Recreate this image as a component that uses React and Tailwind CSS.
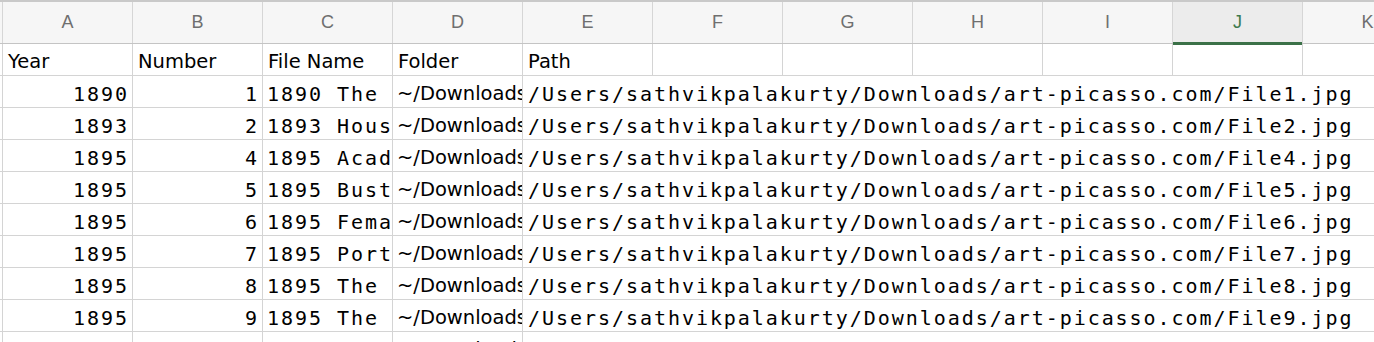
import React from "react";

const cols = ["A", "B", "C", "D", "E", "F", "G", "H", "I", "J", "K"];

const rows = [
  [1890, 1, "1890 The Picador", "File1.jpg"],
  [1893, 2, "1893 House in the Field", "File2.jpg"],
  [1895, 4, "1895 Academical Study", "File4.jpg"],
  [1895, 5, "1895 Bust of a Man", "File5.jpg"],
  [1895, 6, "1895 Female Nude", "File6.jpg"],
  [1895, 7, "1895 Portrait of Aunt Pepa", "File7.jpg"],
  [1895, 8, "1895 The Altar Boy", "File8.jpg"],
  [1895, 9, "1895 The Barefoot Girl", "File9.jpg"],
  [1896, 10, "1896 Andalusian Courtyard", "File10.jpg"],
];

const mono = "font-['DejaVu_Sans_Mono',monospace] text-[20px] tracking-[1.95px] text-black";
const sans = "font-['DejaVu_Sans',sans-serif] text-[19.5px] text-black";

export default function App() {
  return (
    <div className="w-[1374px] h-[342px] overflow-hidden bg-white">
      {/* column header */}
      <div className="flex h-[44px] border-t-2 border-b border-t-[#c9c9c9] border-b-[#c4c4c4] bg-[#f6f6f6] pl-[2px]">
        {cols.map((c) => {
          const sel = c === "J";
          return (
            <div
              key={c}
              className={
                sel
                  ? "relative flex w-[130px] shrink-0 items-center justify-center border-l border-[#d6d6d6] bg-[#ececec] font-['Liberation_Sans',sans-serif] text-[18px] text-[#3d7a4e]"
                  : "flex w-[130px] shrink-0 items-center justify-center border-l border-[#d6d6d6] font-['Liberation_Sans',sans-serif] text-[18px] text-[#6f6f6f]"
              }
            >
              {c}
              {sel && <div className="absolute bottom-[-2px] left-0 right-0 h-[3px] bg-[#3b7148]" />}
            </div>
          );
        })}
      </div>

      {/* header row */}
      <div className="flex h-[32px] border-b border-[#d4d4d4] pl-[2px]">
        {["Year", "Number", "File Name", "Folder", "Path", "", "", "", "", "", ""].map((t, i) => (
          <div
            key={i}
            className={`flex w-[130px] shrink-0 items-center overflow-hidden whitespace-nowrap border-l border-[#d4d4d4] pl-[5px] pt-[5px] ${sans}`}
          >
            {t}
          </div>
        ))}
      </div>

      {/* data rows */}
      {rows.map(([y, n, f, p], i) => (
        <div key={i} className="flex h-[32px] border-b border-[#d4d4d4] pl-[2px]">
          <div className={`flex w-[130px] shrink-0 items-center justify-end border-l border-[#d4d4d4] pr-[3px] pt-[4px] ${mono}`}>
            {y}
          </div>
          <div className={`flex w-[130px] shrink-0 items-center justify-end border-l border-[#d4d4d4] pr-[3px] pt-[4px] ${mono}`}>
            {n}
          </div>
          <div className={`flex w-[130px] shrink-0 items-center overflow-hidden whitespace-nowrap border-l border-[#d4d4d4] pl-[4px] pt-[4px] ${mono}`}>
            {f}
          </div>
          <div className={`flex w-[130px] shrink-0 items-center overflow-hidden whitespace-nowrap border-l border-[#d4d4d4] pl-[4px] pt-[5px] ${sans}`}>
            ~/Downloads/art-picasso.com
          </div>
          <div className={`flex flex-1 items-center overflow-hidden whitespace-nowrap border-l border-[#d4d4d4] pl-[5px] pt-[4px] ${mono}`}>
            /Users/sathvikpalakurty/Downloads/art-picasso.com/{p}
          </div>
        </div>
      ))}
    </div>
  );
}
